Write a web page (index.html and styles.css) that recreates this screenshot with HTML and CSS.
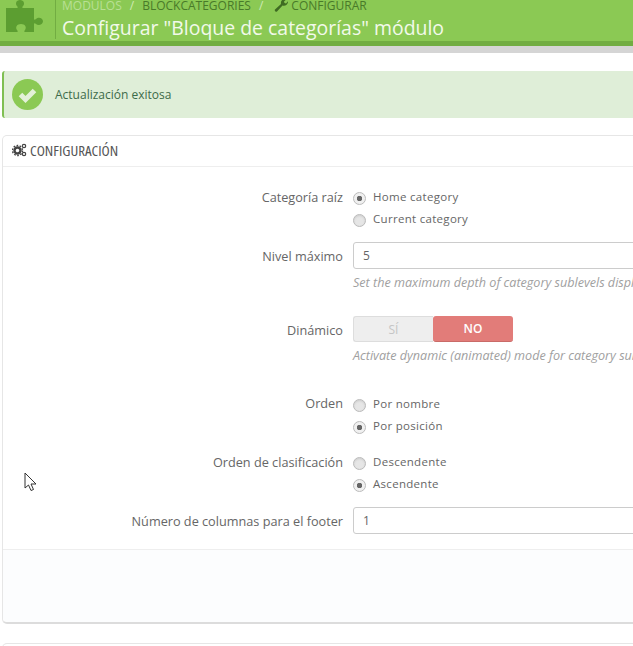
FILE: index.html
```html
<!DOCTYPE html>
<html lang="es">
<head>
    <meta charset="UTF-8">
    <meta name="viewport" content="width=device-width, initial-scale=1.0">
    <title>Configurar "Bloque de categorías" módulo</title>
    <link rel="stylesheet" href="styles.css">
</head>
<body>
    <header class="page-head">
        <div class="head-icon">
            <svg width="42" height="40" viewBox="0 0 42 40">
                <path fill="#5c9e31" d="M2 9h11c1 0 1-1 0-2-2-2-1-6 3-6s5 4 3 6c-1 1-1 2 0 2h11v11c0 1 1 1 2 0 2-2 6-2 7 2 0 4-5 5-7 3-1-1-2-1-2 0v8h-9c-1 0-1-1 0-2 2-3 0-6-4-6s-6 3-4 6c1 1 1 2 0 2H2z"/>
            </svg>
        </div>
        <div class="head-text">
            <div class="crumbs">
                <span class="crumb-first">MÓDULOS</span>
                <span class="crumb-sep">/</span>
                <span>BLOCKCATEGORIES</span>
                <span class="crumb-sep">/</span>
                <span class="crumb-tool">
                    <svg width="14" height="14" viewBox="0 0 14 14">
                        <path fill="#3f6b22" d="M1 11.500 7 6c-.5-2 .5-4.500 3-5 1-.2 2 0 2.500.3L10 3.500l.5 1.500 1.500.5 2-2.300c.4 2.800-2.500 5.300-5.500 4.300L3 13.500c-1 1-3-1-2-2z"/>
                    </svg>
                    CONFIGURAR
                </span>
            </div>
            <h1>Configurar "Bloque de categorías" módulo</h1>
        </div>
    </header>
    <div class="head-shadow"></div>

    <main class="content">
        <div class="alert">
            <svg width="31" height="31" viewBox="0 0 31 31">
                <circle cx="15.500" cy="15.500" r="15.500" fill="#8bc954"/>
                <path fill="none" stroke="#e4f1d8" stroke-width="5" d="M8.500 15.500l5 5 9-9"/>
            </svg>
            <span>Actualización exitosa</span>
        </div>

        <section class="panel">
            <div class="panel-title">
                <svg width="15" height="14" viewBox="0 0 15 14">
                    <g fill="none" stroke="#444">
                        <circle cx="5.500" cy="7.500" r="3" stroke-width="2.400"/>
                        <circle cx="5.500" cy="7.500" r="5" stroke-width="1.400" stroke-dasharray="1.700 1.440"/>
                        <circle cx="12" cy="3" r="1.700" stroke-width="1.200"/>
                        <circle cx="12" cy="11" r="1.700" stroke-width="1.200"/>
                    </g>
                </svg>
                <span class="panel-name">CONFIGURACIÓN</span>
            </div>

            <div class="form-body">
                <div class="row row-radio">
                    <div class="label">Categoría raíz</div>
                    <div class="control">
                        <div class="radio checked">Home category</div>
                        <div class="radio">Current category</div>
                    </div>
                </div>

                <div class="row row-input">
                    <div class="label">Nivel máximo</div>
                    <div class="control">
                        <div class="input">5</div>
                        <p class="help">Set the maximum depth of category sublevels displayed in this block (0 = infinite).</p>
                    </div>
                </div>

                <div class="row row-switch">
                    <div class="label">Dinámico</div>
                    <div class="control">
                        <div class="switch">
                            <span class="switch-off">SÍ</span>
                            <span class="switch-on">NO</span>
                        </div>
                        <p class="help">Activate dynamic (animated) mode for category sublevels.</p>
                    </div>
                </div>

                <div class="row row-order">
                    <div class="label">Orden</div>
                    <div class="control">
                        <div class="radio">Por nombre</div>
                        <div class="radio checked">Por posición</div>
                    </div>
                </div>

                <div class="row row-sort">
                    <div class="label">Orden de clasificación</div>
                    <div class="control">
                        <div class="radio">Descendente</div>
                        <div class="radio checked">Ascendente</div>
                    </div>
                </div>

                <div class="row row-columns">
                    <div class="label">Número de columnas para el footer</div>
                    <div class="control">
                        <div class="input">1</div>
                    </div>
                </div>
            </div>

            <div class="panel-footer"></div>
        </section>

        <section class="panel panel-next"></section>
    </main>

    <svg class="cursor" width="14" height="20" viewBox="0 0 14 20">
        <path fill="#fff" stroke="#333" d="M1 1v15l3.500-3 2.500 5.500 2.500-1-2.500-5.500h5z"/>
    </svg>
</body>
</html>
```

FILE: styles.css
```css
html, body {
    height: 646px;
    overflow: hidden;
}
body {
    margin: 0;
    width: 633px;
    font-family: "Open Sans", sans-serif;
    font-size: 12px;
    color: #666;
    background-color: #fff;
    position: relative;
}
.page-head {
    display: flex;
    height: 41px;
    overflow: hidden;
    background-color: #8bc954;
    border-bottom: 5px solid #72ad42;
    color: #fff;
}
.head-icon {
    width: 55px;
    height: 39px;
    border-right: 1px solid #72ad42;
    display: flex;
    align-items: flex-end;
    flex-shrink: 0;
}
.head-icon svg {
    margin-left: 4px;
}
.head-text {
    display: flex;
    flex-direction: column;
    justify-content: flex-end;
    padding-left: 6px;
    white-space: nowrap;
}
.crumbs {
    display: flex;
    align-items: center;
    gap: 7px;
    height: 16px;
    margin-bottom: 1px;
    font-size: 12px;
    color: #497a29;
}
.crumb-first {
    color: #b9e094;
}
.crumb-sep {
    color: #cfe9b5;
    margin: 0 1px;
}
.crumb-tool {
    display: flex;
    align-items: center;
    gap: 3px;
    margin-left: 3px;
}
h1 {
    margin: 0;
    font-size: 19.450px;
    font-weight: 400;
    line-height: 27px;
    height: 28px;
    color: #f2f9ea;
}
.head-shadow {
    height: 7px;
    background-color: #d5d5d5;
}
.content {
    padding: 18px 0 0 2px;
    width: 900px;
}
.alert {
    display: flex;
    align-items: center;
    gap: 12px;
    height: 47px;
    box-sizing: border-box;
    padding-left: 8px;
    background-color: #dfeed8;
    border-left: 2px solid #7fbf52;
    border-radius: 3px;
    font-size: 12px;
    color: #3d6b4a;
    margin-bottom: 17px;
}
.panel {
    border: 1px solid #e6e6e6;
    border-bottom: 2px solid #dcdcdc;
    border-radius: 5px;
    height: 489px;
    box-sizing: border-box;
    display: flex;
    flex-direction: column;
    margin-bottom: 19px;
}
.panel-next {
    border-bottom: none;
    height: 20px;
    margin-bottom: 0;
}
.panel-title {
    display: flex;
    align-items: center;
    gap: 3px;
    height: 31px;
    flex-shrink: 0;
    padding-left: 9px;
    padding-bottom: 2px;
    box-sizing: border-box;
    border-bottom: 1px solid #eee;
    font-size: 15px;
    color: #555;
}
.panel-name {
    font-stretch: 75%;
}
.form-body {
    height: 382px;
    flex-shrink: 0;
    padding-top: 20px;
    box-sizing: border-box;
}
.row {
    display: flex;
    gap: 10px;
}
.label {
    width: 340px;
    flex-shrink: 0;
    text-align: right;
    font-size: 12.700px;
    line-height: 20px;
    color: #666;
}
.control {
    flex: 1;
}
.radio {
    display: flex;
    align-items: center;
    height: 22px;
    box-sizing: border-box;
    padding-bottom: 4px;
    font-size: 11.500px;
    letter-spacing: 0.300px;
    color: #666;
}
.radio::before {
    content: "";
    width: 11px;
    height: 11px;
    margin-right: 7px;
    margin-bottom: -4px;
    border: 1px solid #bbb;
    border-radius: 50%;
    background-color: #e6e6e6;
    box-shadow: inset 0 1px 2px #ccc;
}
.radio.checked::before {
    background: radial-gradient(circle, #666 0, #666 2.500px, #f0f0f0 3px);
    box-shadow: none;
}
.row-input {
    margin-top: 11px;
}
.row-input .label,
.row-columns .label {
    line-height: 29px;
}
.input {
    height: 27px;
    box-sizing: border-box;
    padding-left: 9px;
    border: 1px solid #ccc;
    border-radius: 3px;
    background-color: #fff;
    font-size: 12px;
    line-height: 25px;
    color: #666;
}
.help {
    margin: 6px 0 0;
    font-size: 12.600px;
    font-style: italic;
    line-height: 15px;
    color: #a0a0a0;
    white-space: nowrap;
}
.row-switch {
    margin-top: 26px;
}
.row-switch .label {
    line-height: 29px;
}
.switch {
    display: flex;
    width: 160px;
    height: 26px;
    font-size: 12px;
    line-height: 25px;
    text-align: center;
}
.switch-off {
    width: 80px;
    background-color: #eee;
    border: 1px solid #ddd;
    border-right: none;
    border-radius: 3px 0 0 3px;
    box-sizing: border-box;
    color: #c5c5c5;
}
.switch-on {
    width: 80px;
    background-color: #e27c79;
    border-bottom: 1px solid #c96b68;
    border-radius: 3px;
    box-sizing: border-box;
    color: #fff;
    font-weight: 600;
}
.row-order {
    margin-top: 31px;
}
.row-order .label {
    line-height: 19px;
}
.row-sort {
    margin-top: 14px;
}
.row-columns {
    margin-top: 11px;
}
.panel-footer {
    flex: 1;
    border-top: 1px solid #eee;
    background-color: #fcfdfe;
    border-radius: 0 0 5px 5px;
}
.cursor {
    position: absolute;
    left: 24px;
    top: 472px;
}
```
